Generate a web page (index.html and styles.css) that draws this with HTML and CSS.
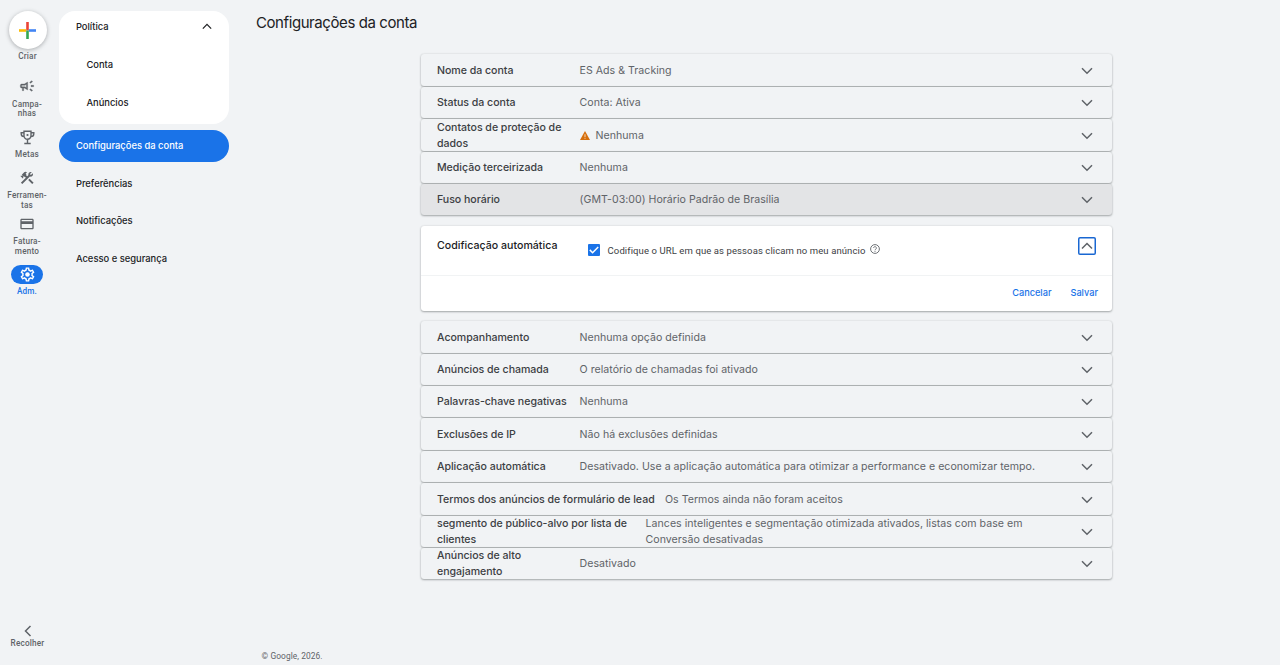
FILE: index.html
```html
<!DOCTYPE html>
<html lang="pt-BR">
  <head>
    <meta charset="UTF-8" />
    <title>Configurações da conta</title>
    <link rel="stylesheet" href="styles.css">
  </head>
  <body>
    <svg class="sprite" aria-hidden="true">
      <symbol id="chevron-down" viewBox="0 0 12 8"><path d="M1 1.3l5 5 5-5" fill="none" stroke="currentColor" stroke-width="1.5"/></symbol>
      <symbol id="chevron-up" viewBox="0 0 12 8"><path d="M1 6.5l5-5 5 5" fill="none" stroke="currentColor" stroke-width="1.5"/></symbol>
    </svg>

    <div class="app">
      <nav class="rail">
        <a class="rail-item create">
          <span class="create-btn">
            <svg width="17" height="17" viewBox="0 0 17 17">
              <path fill="#ea4335" d="M7.2 0h2.6v8.5H7.2z"/>
              <path fill="#fbbc04" d="M0 7.2h7.2v2.6H0z"/>
              <path fill="#4285f4" d="M9.8 7.2H17v2.6H9.8z"/>
              <path fill="#34a853" d="M7.2 8.5h2.6V17H7.2z"/>
            </svg>
          </span>
          <span class="rail-label">Criar</span>
        </a>
        <a class="rail-item campaigns">
          <span class="rail-icon"><svg width="16" height="16" viewBox="0 0 24 24"><path fill="currentColor" stroke="currentColor" stroke-width=".5" d="M18 11v2h4v-2h-4zm-2 6.61c.96.71 2.21 1.65 3.2 2.39.4-.53.8-1.07 1.2-1.6-.99-.74-2.24-1.68-3.2-2.4-.4.54-.8 1.08-1.2 1.61zM20.4 5.6c-.4-.53-.8-1.07-1.2-1.6-.99.74-2.24 1.68-3.2 2.4.4.53.8 1.07 1.2 1.6.96-.72 2.21-1.65 3.2-2.4zM4 9c-1.1 0-2 .9-2 2v2c0 1.1.9 2 2 2h1v4h2v-4h1l5 3V6L8 9H4zm5.03 1.71L11 9.53v4.94l-1.97-1.18-.48-.29H4v-2h4.55l.48-.29z"/></svg></span>
          <span class="rail-label">Campa-<br>nhas</span>
        </a>
        <a class="rail-item goals">
          <span class="rail-icon"><svg width="15" height="15" viewBox="0 0 15 15"><g fill="none" stroke="currentColor" stroke-width="1.4"><path d="M4 1.2h7v4.6a3.5 3.5 0 0 1-7 0zM4 2.7H1.2v1.1A2.8 2.8 0 0 0 4 6.6M11 2.7h2.8v1.1A2.8 2.8 0 0 1 11 6.6M7.5 9.3v4M4.3 13.5h6.4"/></g><circle cx="7.5" cy="5" r="1.1" fill="currentColor"/></svg></span>
          <span class="rail-label">Metas</span>
        </a>
        <a class="rail-item tools">
          <span class="rail-icon"><svg width="16" height="16" viewBox="0 0 24 24"><path fill="currentColor" d="M13.78 15.17l2.12-2.12 6 6-2.12 2.12zM17.5 10c1.93 0 3.5-1.57 3.5-3.5 0-.58-.16-1.12-.41-1.6l-2.7 2.7-1.49-1.49 2.7-2.7c-.48-.25-1.02-.41-1.6-.41C15.57 3 14 4.57 14 6.5c0 .41.08.8.21 1.16l-1.85 1.85-1.78-1.78.71-.71-1.41-1.41L12 3.49c-1.17-1.17-3.07-1.17-4.24 0L4.22 7.03l1.41 1.41H2.81l-.71.71 3.54 3.54.71-.71V9.15l1.41 1.41.71-.71 1.78 1.78-7.41 7.41 2.12 2.12L16.34 9.79c.36.13.75.21 1.16.21z"/></svg></span>
          <span class="rail-label">Ferramen-<br>tas</span>
        </a>
        <a class="rail-item billing">
          <span class="rail-icon"><svg width="16" height="16" viewBox="0 0 24 24"><path fill="currentColor" d="M20 4H4c-1.11 0-1.99.89-1.99 2L2 18c0 1.11.89 2 2 2h16c1.11 0 2-.89 2-2V6c0-1.11-.89-2-2-2zm0 14H4v-6h16v6zm0-10H4V6h16v2z"/></svg></span>
          <span class="rail-label">Fatura-<br>mento</span>
        </a>
        <a class="rail-item admin active">
          <span class="rail-icon"><svg width="17" height="17" viewBox="0 0 24 24"><path fill="currentColor" d="M19.43 12.98c.04-.32.07-.64.07-.98s-.03-.66-.07-.98l2.11-1.65c.19-.15.24-.42.12-.64l-2-3.46c-.09-.16-.26-.25-.44-.25-.06 0-.12.01-.17.03l-2.49 1c-.52-.4-1.08-.73-1.69-.98l-.38-2.65C14.46 2.18 14.25 2 14 2h-4c-.25 0-.46.18-.49.42l-.38 2.65c-.61.25-1.17.59-1.69.98l-2.49-1c-.06-.02-.12-.03-.18-.03-.17 0-.34.09-.43.25l-2 3.46c-.13.22-.07.49.12.64l2.11 1.65c-.04.32-.07.65-.07.98s.03.66.07.98l-2.11 1.65c-.19.15-.24.42-.12.64l2 3.46c.09.16.26.25.44.25.06 0 .12-.01.17-.03l2.49-1c.52.4 1.08.73 1.69.98l.38 2.65c.03.24.24.42.49.42h4c.25 0 .46-.18.49-.42l.38-2.65c.61-.25 1.17-.59 1.69-.98l2.49 1c.06.02.12.03.18.03.17 0 .34-.09.43-.25l2-3.46c.12-.22.07-.49-.12-.64l-2.11-1.65zm-1.98-1.71c.04.31.05.52.05.73 0 .21-.02.43-.05.73l-.14 1.13.89.7 1.08.84-.7 1.21-1.27-.51-1.04-.42-.9.68c-.43.32-.84.56-1.25.73l-1.06.43-.16 1.13-.2 1.35h-1.4l-.19-1.35-.16-1.13-1.06-.43c-.43-.18-.83-.41-1.23-.71l-.91-.7-1.06.43-1.27.51-.7-1.21 1.08-.84.89-.7-.14-1.13c-.03-.31-.05-.54-.05-.74s.02-.43.05-.73l.14-1.13-.89-.7-1.08-.84.7-1.21 1.27.51 1.04.42.9-.68c.43-.32.84-.56 1.25-.73l1.06-.43.16-1.13.2-1.35h1.39l.19 1.35.16 1.13 1.06.43c.43.18.83.41 1.23.71l.91.7 1.06-.43 1.27-.51.7 1.21-1.07.85-.89.7.14 1.13z"/><circle cx="12" cy="12" r="3.2" fill="currentColor"/></svg></span>
          <span class="rail-label">Adm.</span>
        </a>
        <a class="rail-item collapse">
          <svg width="8" height="12" viewBox="0 0 8 12"><path d="M6.5 1l-5 5 5 5" fill="none" stroke="currentColor" stroke-width="1.5"/></svg>
          <span class="rail-label">Recolher</span>
        </a>
      </nav>

      <aside class="sidebar">
        <div class="nav-group">
          <a class="nav-item">Política <svg width="10" height="7"><use href="#chevron-up"/></svg></a>
          <a class="nav-item sub">Conta</a>
          <a class="nav-item sub">Anúncios</a>
        </div>
        <a class="nav-item selected">Configurações da conta</a>
        <a class="nav-item">Preferências</a>
        <a class="nav-item">Notificações</a>
        <a class="nav-item">Acesso e segurança</a>
      </aside>

      <main class="main">
        <h1>Configurações da conta</h1>

        <div class="panels">
          <div class="panel"><div class="name">Nome da conta</div><div class="value">ES Ads &amp; Tracking</div><svg class="arrow"><use href="#chevron-down"/></svg></div>
          <div class="panel"><div class="name">Status da conta</div><div class="value">Conta: Ativa</div><svg class="arrow"><use href="#chevron-down"/></svg></div>
          <div class="panel">
            <div class="name">Contatos de proteção de<br>dados</div>
            <div class="value warn">
              <svg width="10" height="9" viewBox="0 0 10 9"><path fill="#d56e0c" d="M5 0l5 9H0z"/><path fill="#f8d9bd" d="M4.5 3.2h1v2.7h-1zM4.5 6.7h1v1h-1z"/></svg>
              Nenhuma
            </div>
            <svg class="arrow"><use href="#chevron-down"/></svg>
          </div>
          <div class="panel"><div class="name">Medição terceirizada</div><div class="value">Nenhuma</div><svg class="arrow"><use href="#chevron-down"/></svg></div>
          <div class="panel hovered"><div class="name">Fuso horário</div><div class="value">(GMT-03:00) Horário Padrão de Brasília</div><svg class="arrow"><use href="#chevron-down"/></svg></div>

          <div class="panel-open">
            <div class="open-top">
              <div class="name">Codificação automática</div>
              <div class="open-body">
                <span class="checkbox"><svg width="10" height="8" viewBox="0 0 10 8"><path d="M.8 3.9l2.8 2.8L9.2 1" fill="none" stroke="#fff" stroke-width="1.5"/></svg></span>
                <span class="check-label">Codifique o URL em que as pessoas clicam no meu anúncio</span>
                <svg class="help" width="10" height="10" viewBox="0 0 10 10"><circle cx="5" cy="5" r="4.4" fill="none" stroke="#5f6368" stroke-width=".9"/><path d="M3.6 4a1.4 1.4 0 1 1 2.3 1.1C5.3 5.5 5 5.7 5 6.3" fill="none" stroke="#5f6368" stroke-width=".85"/><circle cx="5" cy="7.5" r=".5" fill="#5f6368"/></svg>
              </div>
              <button class="toggle"><svg width="12" height="8"><use href="#chevron-up"/></svg></button>
            </div>
            <div class="open-actions">
              <a>Cancelar</a>
              <a>Salvar</a>
            </div>
          </div>

          <div class="panel"><div class="name">Acompanhamento</div><div class="value">Nenhuma opção definida</div><svg class="arrow"><use href="#chevron-down"/></svg></div>
          <div class="panel"><div class="name">Anúncios de chamada</div><div class="value">O relatório de chamadas foi ativado</div><svg class="arrow"><use href="#chevron-down"/></svg></div>
          <div class="panel"><div class="name">Palavras-chave negativas</div><div class="value">Nenhuma</div><svg class="arrow"><use href="#chevron-down"/></svg></div>
          <div class="panel"><div class="name">Exclusões de IP</div><div class="value">Não há exclusões definidas</div><svg class="arrow"><use href="#chevron-down"/></svg></div>
          <div class="panel"><div class="name">Aplicação automática</div><div class="value">Desativado. Use a aplicação automática para otimizar a performance e economizar tempo.</div><svg class="arrow"><use href="#chevron-down"/></svg></div>
          <div class="panel"><div class="name lead">Termos dos anúncios de formulário de lead</div><div class="value">Os Termos ainda não foram aceitos</div><svg class="arrow"><use href="#chevron-down"/></svg></div>
          <div class="panel"><div class="name segment">segmento de público-alvo por lista de<br>clientes</div><div class="value">Lances inteligentes e segmentação otimizada ativados, listas com base em<br>Conversão desativadas</div><svg class="arrow"><use href="#chevron-down"/></svg></div>
          <div class="panel"><div class="name">Anúncios de alto<br>engajamento</div><div class="value">Desativado</div><svg class="arrow"><use href="#chevron-down"/></svg></div>
        </div>

        <footer>© Google, 2026.</footer>
      </main>
    </div>
  </body>
</html>
```
FILE: styles.css
```css
* {
  margin: 0;
  padding: 0;
  box-sizing: border-box;
}

body {
  font-family: Inter, sans-serif;
  background: #f1f3f5;
  color: #202124;
  overflow: hidden;
}

svg {
  display: block;
  flex: none;
}

.sprite {
  display: none;
}

.app {
  display: flex;
  height: 665px;
}

/* left icon rail */
.rail {
  width: 54px;
  padding: 11px 0 17px;
  display: flex;
  flex-direction: column;
}

.rail-item {
  display: flex;
  flex-direction: column;
  align-items: center;
  color: #5f6368;
}

.rail-label {
  font: 500 8.2px/9.5px Roboto, sans-serif;
  letter-spacing: 0.18px;
  text-align: center;
}

.rail-icon {
  display: flex;
  align-items: center;
  justify-content: center;
  width: 32px;
  height: 19px;
  border-radius: 10px;
}

.create-btn {
  display: flex;
  align-items: center;
  justify-content: center;
  width: 38px;
  height: 38px;
  margin: 0 0 3px 1px;
  border-radius: 50%;
  background: #fff;
  box-shadow: 0 1px 4px rgba(60, 64, 67, 0.4);
}

.create .rail-label,
.collapse .rail-label {
  margin-left: 1px;
}

.campaigns {
  margin-top: 15px;
}

.campaigns .rail-label {
  margin-top: 4px;
}

.goals {
  margin-top: 9px;
}

.goals .rail-label {
  margin-top: 3px;
}

.tools {
  margin-top: 9px;
}

.tools .rail-label,
.billing .rail-label {
  margin-top: 4px;
}

.billing {
  margin-top: 4px;
}

.admin {
  margin-top: 9px;
}

.admin .rail-label {
  margin-top: 3px;
}

.active {
  color: #1a73e8;
}

.active .rail-icon {
  background: #1a73e8;
  color: #fff;
}

.collapse {
  margin-top: auto;
  gap: 2px;
}

.collapse svg {
  margin-left: 1px;
}

/* section navigation */
.sidebar {
  width: 170px;
  margin: 10.8px 0 0 5.4px;
  font-size: 9.4px;
  font-weight: 500;
}

.nav-group {
  height: 113px;
  margin-bottom: 5.8px;
  border-radius: 16px;
  background: #fff;
}

.nav-item {
  display: flex;
  align-items: center;
  justify-content: space-between;
  height: 32px;
  margin-bottom: 5.7px;
  padding: 0 17px 0 16.5px;
  border-radius: 16px;
}

.nav-item.sub {
  padding-left: 27px;
}

.nav-item.selected {
  background: #1a73e8;
  color: #fff;
}

.main {
  flex: 1;
  display: flex;
  flex-direction: column;
  padding-left: 26.6px;
}

h1 {
  font-size: 15px;
  line-height: 20px;
  font-weight: 400;
  letter-spacing: -0.42px;
  margin-top: 13px;
}

/* settings panels */
.panels {
  width: 691px;
  margin: 21.4px 0 0 165px;
  font-size: 10.6px;
  line-height: 16px;
}

.panel,
.panel-open {
  border-radius: 3px;
  box-shadow: 0 1px 2px rgba(60, 64, 67, 0.4), 0 0 2px rgba(60, 64, 67, 0.15);
}

.panel {
  display: flex;
  align-items: center;
  height: 31.4px;
  margin-bottom: 1px;
  padding: 1.4px 19px 0 16px;
  background: #f1f3f5;
}

.panel.hovered {
  background: #e3e4e6;
}

.name {
  flex: none;
  width: 130px;
  margin-right: 12.6px;
  font-weight: 500;
  letter-spacing: -0.03px;
  white-space: nowrap;
  color: #3c4043;
}

.name.lead {
  width: 217px;
  margin-right: 11px;
}

.name.segment {
  width: 196px;
}

.value {
  flex: 1;
  color: #5f6368;
  letter-spacing: 0.02px;
  white-space: nowrap;
}

.value.warn {
  display: flex;
  align-items: center;
  gap: 6px;
}

.arrow {
  width: 12px;
  height: 8px;
  color: #5f6368;
}

.panel-open {
  height: 84.6px;
  margin: 10.7px 0 10.6px;
  background: #fff;
}

.open-top {
  display: flex;
  height: 50px;
  padding: 11px 16px 0;
  border-bottom: 1px solid #f1f3f4;
}

.panel-open .name {
  padding-top: 1px;
  letter-spacing: 0.02px;
  color: #202124;
}

.open-body {
  flex: 1;
  display: flex;
  align-items: flex-start;
  padding: 7px 0 0 8px;
}

.checkbox {
  display: flex;
  align-items: center;
  justify-content: center;
  width: 12px;
  height: 12px;
  border-radius: 1px;
  background: #1a73e8;
}

.check-label {
  margin-left: 8px;
  font: 400 9.5px/13px Roboto, sans-serif;
  letter-spacing: 0.1px;
  color: #3c4043;
}

.help {
  margin-left: 5px;
}

.toggle {
  display: flex;
  align-items: center;
  justify-content: center;
  width: 18px;
  height: 18px;
  border: none;
  border-radius: 2px;
  box-shadow: inset 0 0 0 1.5px #1967d2;
  background: #fff;
  color: #5f6368;
}

.open-actions {
  display: flex;
  justify-content: flex-end;
  align-items: center;
  gap: 19px;
  height: 34px;
  padding-right: 14px;
  font-size: 9.2px;
  font-weight: 500;
  color: #1a73e8;
}

footer {
  margin: auto 0 4px 5.6px;
  font: 400 8.4px/10px Roboto, sans-serif;
  letter-spacing: 0.08px;
  color: #5f6368;
}
```
